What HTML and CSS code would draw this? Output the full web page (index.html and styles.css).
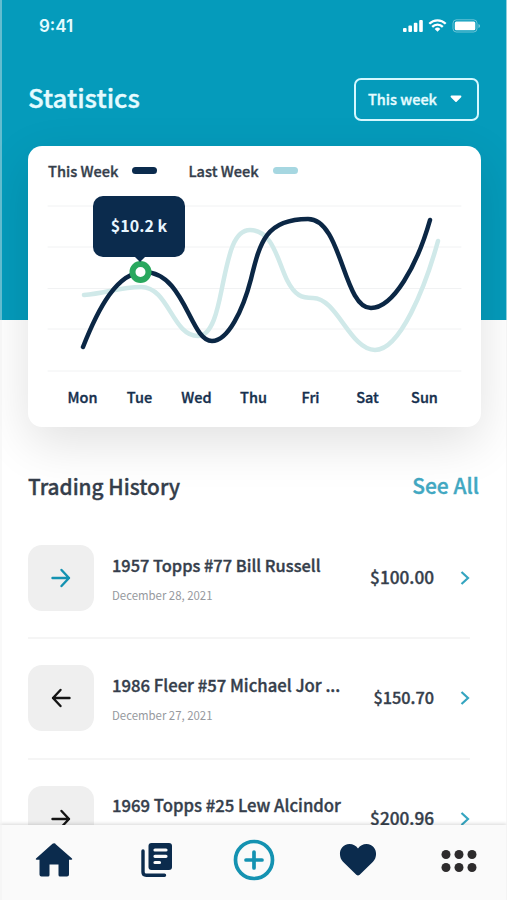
FILE: index.html
```html
<!DOCTYPE html>
<html lang="en">
<head>
  <meta charset="UTF-8" />
  <meta name="viewport" content="width=device-width, initial-scale=1" />
  <title>Statistics</title>
  <link rel="stylesheet" href="styles.css">
</head>
<body>

<div class="screen">
  <header class="top">
    <div class="status-bar">
      <span class="time">9:41</span>
      <svg class="status-icons" width="78" height="16" viewBox="0 0 78 16" fill="#fff">
        <rect x="0" y="10" width="3.600" height="4" rx="1"/>
        <rect x="5.400" y="7.500" width="3.600" height="6.500" rx="1"/>
        <rect x="10.800" y="4.800" width="3.600" height="9.200" rx="1"/>
        <rect x="16.200" y="2" width="3.600" height="12" rx="1"/>
        <g fill="none" stroke="#fff" stroke-width="2.3">
          <path d="M26.300 5.800a11.500 11.500 0 0 1 16.400 0"/>
          <path d="M29.200 8.900a7.400 7.400 0 0 1 10.600 0"/>
        </g>
        <path d="M34.500 13.800l-2.800-2.900a4 4 0 0 1 5.600 0z"/>
        <rect x="50" y="1.800" width="24" height="12.200" rx="3.400" fill="none" stroke="#fff" stroke-opacity=".4"/>
        <rect x="51.800" y="3.600" width="20.500" height="8.600" rx="1.500"/>
        <path d="M75.500 6v4q1.500-.6 1.500-2t-1.500-2z" fill-opacity=".5"/>
      </svg>
    </div>
    <div class="title-row">
      <h1>Statistics</h1>
      <button class="period" type="button">
        <span>This week</span>
        <svg width="12" height="8" viewBox="0 0 12 8"><path d="M1.500 1.500h9L6 6z" fill="#fff" stroke="#fff" stroke-width="1.800" stroke-linejoin="round"/></svg>
      </button>
    </div>
  </header>

  <section class="card">
    <div class="legend">
      <span class="legend-name">This Week</span><i class="key this"></i>
      <span class="legend-name">Last Week</span><i class="key last"></i>
    </div>
    <div class="chart">
      <svg width="453" height="190" viewBox="28 190 453 190" fill="none" stroke-linecap="round">
        <path class="grid" d="M48 206H461M48 247H461M48 288.500H461M48 329H461M48 371H461"/>
        <path class="line-last" d="M84 295C106 293 121 287 141 287C169 287 172 336 198 336C214 336 219 302 223 283C229 254 234 230 250 230C273 230 278 262 287 280C295 296 302 298 313 298C337 298 350 350 375 350C400 350 425 288 438 241"/>
        <path class="line-this" d="M83 347C98 309 117 272 144 272C185 272 190 341 212 341C228 341 243 310 251 279C260 242 266 219 308 219C342 219 343 308 371 308C393 308 417 266 430 220"/>
        <circle cx="140.500" cy="272" r="8" fill="#fff" stroke="#29a85e" stroke-width="6"/>
      </svg>
      <div class="tooltip">$10.2 k</div>
    </div>
    <div class="days">
      <span>Mon</span><span>Tue</span><span>Wed</span><span>Thu</span><span>Fri</span><span>Sat</span><span>Sun</span>
    </div>
  </section>

  <section class="history">
    <div class="history-head">
      <h2>Trading History</h2>
      <a class="see-all">See All</a>
    </div>

    <div class="trade">
      <div class="trade-icon teal">
        <svg width="20" height="20" viewBox="0 0 20 20"><path d="M1.500 10H18M10.500 2L18 10L10.500 18"/></svg>
      </div>
      <div class="trade-info">
        <h3 class="narrow">1957 Topps #77 Bill Russell</h3>
        <p>December 28, 2021</p>
      </div>
      <span class="amount">$100.00</span>
      <svg class="chevron" width="10" height="14" viewBox="0 0 10 14"><path d="M1.500 1L8 7L1.500 13"/></svg>
    </div>

    <div class="trade">
      <div class="trade-icon">
        <svg width="20" height="20" viewBox="0 0 20 20"><path d="M18.500 10H2M9.500 2L2 10L9.500 18"/></svg>
      </div>
      <div class="trade-info">
        <h3>1986 Fleer #57 Michael Jor ...</h3>
        <p>December 27, 2021</p>
      </div>
      <span class="amount small">$150.70</span>
      <svg class="chevron" width="10" height="14" viewBox="0 0 10 14"><path d="M1.500 1L8 7L1.500 13"/></svg>
    </div>

    <div class="trade">
      <div class="trade-icon">
        <svg width="20" height="20" viewBox="0 0 20 20"><path d="M1.500 10H18M10.500 2L18 10L10.500 18"/></svg>
      </div>
      <div class="trade-info">
        <h3>1969 Topps #25 Lew Alcindor</h3>
        <p>December 26, 2021</p>
      </div>
      <span class="amount">$200.96</span>
      <svg class="chevron" width="10" height="14" viewBox="0 0 10 14"><path d="M1.500 1L8 7L1.500 13"/></svg>
    </div>
  </section>

  <nav class="tabs">
    <svg width="38" height="36" viewBox="0 0 38 36" fill="#0b2b4d">
      <path d="M19 .8L37 16.500q.8 1-.5 1.200H34V32.500q0 2-2 2H25q-1.500 0-1.500-1.500V22.500h-9V33q0 1.500-1.500 1.500H6.500q-2 0-2-2V17.700H1.500Q.2 17.500 1 16.500L17.500 1.800Q19 .5 20.500 1.800z"/>
    </svg>
    <svg class="tab-news" width="32" height="36" viewBox="0 0 32 36">
      <path d="M2 9V30q0 3.200 3.200 3.200H23.500" fill="none" stroke="#0b2b4d" stroke-width="3.400" stroke-linecap="round"/>
      <rect x="7.500" y="1" width="23.500" height="27" rx="3" fill="#0b2b4d"/>
      <path d="M14 8H25M14 14.300H25M14 20.500H18.500" stroke="#fafafa" stroke-width="3.200" stroke-linecap="round"/>
    </svg>
    <svg width="42" height="42" viewBox="0 0 42 42" fill="none" stroke="#1492b1" stroke-width="3.700" stroke-linecap="round">
      <circle cx="21" cy="21" r="18.500"/>
      <path d="M21 13V29M13 21H29"/>
    </svg>
    <svg width="38" height="34" viewBox="0 0 38 34" fill="#0b2b4d">
      <path d="M17.300 31.700L4 18.700C-1.500 13 .3 1.500 10.500 1C14 1 17 2.700 19 5.500C21 2.700 24 1 27.500 1C37.700 1.500 39.500 13 34 18.700L20.700 31.700Q19 33.300 17.300 31.700z"/>
    </svg>
    <svg class="tab-more" width="36" height="24" viewBox="0 0 36 24" fill="#2d2b2c">
      <circle cx="5" cy="5.500" r="4.500"/><circle cx="18" cy="5.500" r="4.500"/><circle cx="31" cy="5.500" r="4.500"/>
      <circle cx="5" cy="18.500" r="4.500"/><circle cx="18" cy="18.500" r="4.500"/><circle cx="31" cy="18.500" r="4.500"/>
    </svg>
  </nav>
</div>

</body>
</html>
```
FILE: styles.css
```css
* {
  box-sizing: border-box;
}
body {
  margin: 0;
  background: #fff;
  font-family: "Noto Sans CJK SC", "Open Sans", sans-serif;
  font-weight: 500;
  color: #353e4b;
  -webkit-text-stroke: 0.35px;
}
h1, h2, h3, p {
  margin: 0;
  font-weight: 500;
}
.screen {
  position: relative;
  height: 900px;
  overflow: hidden;
  display: flex;
  flex-direction: column;
}
.screen::before {
  content: "";
  position: absolute;
  inset: 0 auto 0 0;
  width: 2px;
  background: rgba(240, 240, 240, 0.4);
  z-index: 3;
}
.screen::after {
  content: "";
  position: absolute;
  inset: 0 0 0 auto;
  width: 1px;
  background: rgba(240, 240, 240, 0.6);
  z-index: 3;
}
.top {
  height: 320px;
  flex: none;
  background: #059bbb;
  color: #fff;
}
.status-bar {
  display: flex;
  justify-content: space-between;
  align-items: center;
  height: 52px;
  padding: 0 26px 0 39px;
}
.time {
  font-family: Inter, sans-serif;
  font-size: 17px;
  font-weight: 600;
  color: #e5fbff;
  -webkit-text-stroke: 0;
}
.title-row {
  display: flex;
  justify-content: space-between;
  align-items: center;
  height: 94px;
  padding: 0 28px 0 28px;
}
h1 {
  margin-top: -5px;
  font-size: 25.8px;
  line-height: 36px;
  color: #e5fbff;
}
.period {
  display: flex;
  align-items: center;
  justify-content: space-between;
  width: 125px;
  height: 43px;
  padding: 0 15px 2px 12px;
  border: 2px solid #d5f8ff;
  border-radius: 7px;
  background: none;
  color: #e5fbff;
  font: inherit;
  font-size: 14.5px;
}
.period svg {
  margin-top: 2px;
}
.card {
  position: relative;
  flex: none;
  width: 453px;
  height: 281px;
  margin: -174px 0 0 28px;
  padding-top: 10px;
  background: #fff;
  border-radius: 14px;
  box-shadow: 0 16px 50px rgba(0, 0, 0, 0.12);
}
.legend {
  display: flex;
  align-items: center;
  height: 28px;
  padding-left: 20px;
  font-size: 14.6px;
}
.key {
  width: 25px;
  height: 7px;
  margin: 0 31px 0 14px;
  border-radius: 4px;
}
.key.this {
  background: #0b2b4d;
}
.key.last {
  background: #a6d7e1;
}
.chart {
  position: relative;
  height: 190px;
  margin-top: 6px;
}
.chart svg {
  display: block;
}
.grid {
  stroke: #f1f2f3;
  stroke-width: 1;
}
.line-last {
  stroke: #d0e9e9;
  stroke-width: 4.5;
}
.line-this {
  stroke: #0b2745;
  stroke-width: 4.5;
}
.tooltip {
  position: absolute;
  left: 65px;
  top: 6px;
  width: 92px;
  height: 61px;
  border-radius: 10px;
  background: #0b2b4d;
  color: #e8f6ff;
  font-size: 16px;
  font-weight: 700;
  line-height: 58px;
  text-align: center;
  -webkit-text-stroke: 0;
}
.tooltip::after {
  content: "";
  position: absolute;
  left: 41px;
  top: 60px;
  border: 6px solid transparent;
  border-top-color: #0b2b4d;
  border-bottom: 0;
}
.days {
  display: flex;
  padding: 0 28px 0 26px;
  margin-top: 5px;
  font-size: 14.5px;
  line-height: 24px;
  color: #16304e;
}
.days span {
  flex: 1;
  text-align: center;
}
.history {
  padding: 40px 28px 0;
}
.history-head {
  display: flex;
  justify-content: space-between;
  align-items: center;
  height: 38px;
}
h2 {
  font-size: 20.8px;
}
.see-all {
  margin-top: -2px;
  font-size: 21px;
  color: #42a8c2;
}
.trade {
  display: flex;
  align-items: center;
  width: 442px;
  height: 120.3px;
  border-bottom: 2px solid #f5f5f5;
}
.history-head + .trade {
  margin-top: 14px;
}
.trade-icon {
  display: flex;
  align-items: center;
  justify-content: center;
  flex: none;
  width: 66px;
  height: 66px;
  border-radius: 14px;
  background: #efefef;
}
.trade-icon svg {
  fill: none;
  stroke: #151515;
  stroke-width: 2.4;
  stroke-linecap: round;
  stroke-linejoin: round;
}
.trade-icon.teal svg {
  stroke: #1492b1;
}
.trade-info {
  flex: 1;
  margin-top: -1px;
  padding-left: 18px;
  white-space: nowrap;
}
h3 {
  font-size: 16.7px;
  line-height: 28px;
}
h3.narrow {
  font-size: 16.4px;
}
.trade-info p {
  margin-top: 6px;
  font-size: 11.4px;
  line-height: 20px;
  font-weight: 400;
  color: #96999e;
  -webkit-text-stroke: 0;
}
.amount {
  margin-top: -3px;
  font-size: 17.2px;
}
.amount.small {
  font-size: 16.3px;
}
.chevron {
  margin: 0 0 0 26px;
  fill: none;
  stroke: #35a5c0;
  stroke-width: 2.2;
}
.tabs {
  position: absolute;
  left: 0;
  right: 0;
  bottom: 0;
  height: 75px;
  padding: 0 30px 5px 35px;
  display: flex;
  align-items: center;
  justify-content: space-between;
  background: #fafafa;
  box-shadow: 0 -1px 4px rgba(0, 0, 0, 0.16);
}
.tab-news {
  margin: 0 -4px 0 4px;
}
.tab-more {
  margin-top: 2px;
}
```
